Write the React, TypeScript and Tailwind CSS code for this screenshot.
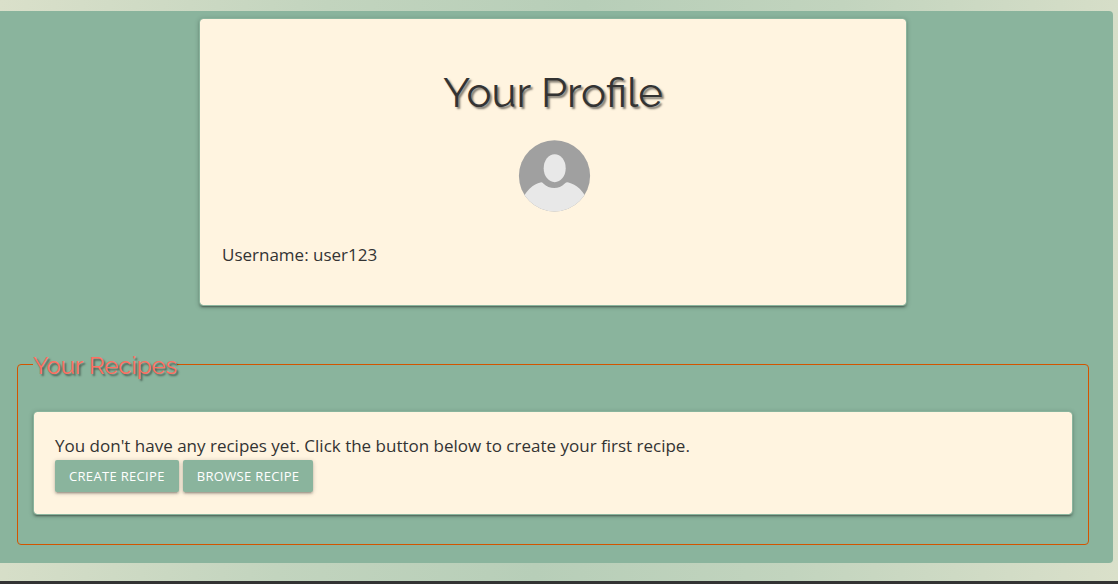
import type { ReactNode } from 'react';

function Card({ className = '', children }: { className?: string; children: ReactNode }) {
  return (
    <div
      className={`rounded border border-[#8ab49d] bg-[#fff4e0] bg-clip-padding shadow-[0_2px_2px_0_rgba(0,0,0,0.14),0_3px_1px_-2px_rgba(0,0,0,0.2),0_1px_5px_0_rgba(0,0,0,0.2)] ${className}`}
    >
      {children}
    </div>
  );
}

function Avatar() {
  return (
    <svg viewBox="0 0 72 72" className="size-[72px] overflow-visible" role="img" aria-label="Profile picture">
      <defs>
        <clipPath id="avatar-circle">
          <circle cx="37.5" cy="35.8" r="35.6" />
        </clipPath>
      </defs>
      <g clipPath="url(#avatar-circle)">
        <rect width="74" height="73" fill="#a0a0a0" />
        <ellipse cx="37.7" cy="28.2" rx="11" ry="14" fill="#e8e8e8" />
        <path
          d="M2 66 C8 50 17 43.8 23.5 42.4 Q25 42 26.3 43.6 C32.5 49.6 42 49.6 47.8 43.6 Q49.5 41.6 51.5 42.4 C59 44.4 67 50 72 64 V76 H2 Z"
          fill="#e8e8e8"
        />
      </g>
    </svg>
  );
}

function ActionButton({ children }: { children: ReactNode }) {
  return (
    <button
      type="button"
      className="h-8 cursor-pointer rounded-xs bg-[#8ab49d] px-[14px] text-[13px] tracking-wide text-white uppercase shadow-[0_2px_2px_0_rgba(0,0,0,0.14),0_3px_1px_-2px_rgba(0,0,0,0.12),0_1px_5px_0_rgba(0,0,0,0.2)]"
    >
      {children}
    </button>
  );
}

export default function App() {
  return (
    <div className="bg-[linear-gradient(95deg,#dae0ca,#c2d4be_28%,#b7ceb8_50%,#c2d4be_72%,#dae0ca)] pt-[11px] font-['Open_Sans',sans-serif] text-[17px] leading-[26px] text-[#333]">
      <main className="mr-[5px] rounded-r bg-[#8ab49d] pt-[7px] pr-6 pb-[18px] pl-[17px]">
        <Card className="mx-auto h-[288px] w-full max-w-[708px] px-[22px] pt-[48px]">
          <h1 className="text-center font-[Raleway,Lato,sans-serif] text-[42px] leading-[52px] text-shadow-[2px_2px_2px_rgba(0,0,0,0.5)]">
            Your Profile
          </h1>
          <div className="mt-[21px] flex justify-center">
            <Avatar />
          </div>
          <p className="mt-[30px]">Username: user123</p>
        </Card>
        <fieldset className="mt-[41px] rounded border border-[#d35400] px-[15px] pb-[29px]">
          <legend className="pt-1 font-[Raleway,Lato,sans-serif] text-[24px] leading-[30px] text-[#ff6f61] text-shadow-[2px_2px_2px_rgba(0,0,0,0.5)]">
            Your Recipes
          </legend>
          <Card className="mt-[30px] px-[21px] pt-[21px] pb-[22px]">
            <p>You don't have any recipes yet. Click the button below to create your first recipe.</p>
            <div className="mt-px flex flex-wrap gap-1">
              <ActionButton>Create Recipe</ActionButton>
              <ActionButton>Browse Recipe</ActionButton>
            </div>
          </Card>
        </fieldset>
      </main>
      <div className="h-[18px]" />
      <footer className="h-[3px] bg-[#333]" />
    </div>
  );
}
